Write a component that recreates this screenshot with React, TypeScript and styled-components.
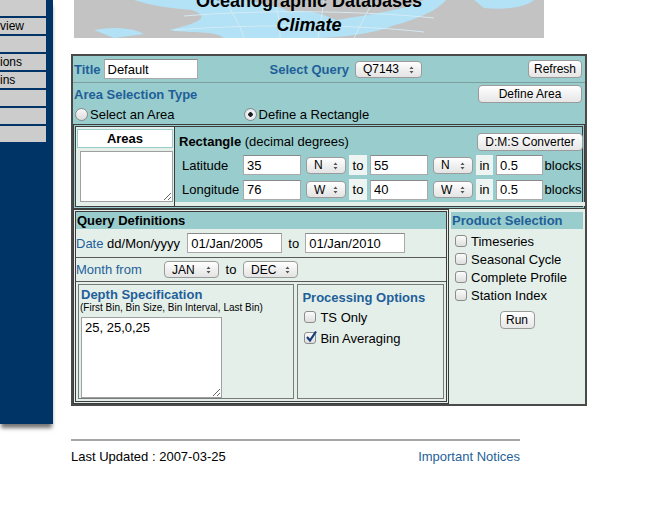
import styled, { createGlobalStyle } from 'styled-components'

const GlobalStyle = createGlobalStyle`
    body {
        margin: 0;
        background: #ffffff;
        font-family: "Liberation Sans", Arial, sans-serif;
        font-size: 13px;
        color: #000000;
    }
`

const TEAL = '#99cccc'
const LIGHT = '#e4efea'
const BLUE = '#1f5f99'

const Page = styled.div`
    display: flex;
    align-items: flex-start;
`

const Sidebar = styled.div`
    width: 53px;
    height: 424px;
    background: #003366;
    box-shadow: 0 5px 4px -1px rgba(0, 0, 0, 0.55);
    display: flex;
    flex-direction: column;
    gap: 2px;
`

const MenuItem = styled.div`
    width: 46px;
    height: 16px;
    background: #cccccc;
    font-size: 12px;
    line-height: 17px;
    overflow: hidden;
    white-space: nowrap;
`

const Main = styled.div`
    margin-left: 18px;
    width: 516px;
`

const Banner = styled.div`
    position: relative;
    margin-left: 3px;
    width: 470px;
    height: 38px;
    overflow: hidden;
    background: #c3c3c3;
    text-align: center;
    font-weight: bold;
    font-size: 18px;
    line-height: 21px;
`

const BannerArt = styled.svg`
    position: absolute;
    inset: 0;
`

const BannerText = styled.div<{ $italic?: boolean }>`
    position: relative;
    font-style: ${p => (p.$italic ? 'italic' : 'normal')};
    margin-top: ${p => (p.$italic ? '3px' : '-9px')};
`

const Frame = styled.div`
    margin-top: 16px;
    width: 512px;
    height: 348px;
    border: 2px solid #4a4a4a;
    background: ${TEAL};
    display: flex;
    flex-direction: column;
`

const Row = styled.div<{ $h: number }>`
    height: ${p => p.$h}px;
    display: flex;
    align-items: center;
    padding: 0 3px 0 1px;
`

const Divider = styled.div`
    height: 1px;
    background: #7f9f9f;
`

const Label = styled.span<{ $gap?: number }>`
    font-weight: bold;
    color: ${BLUE};
    margin-right: ${p => p.$gap ?? 0}px;
`

const Push = styled.span<{ $w: number }>`
    flex: 0 0 ${p => p.$w}px;
`

const Spring = styled.span`
    flex: 1;
`

const TextInput = styled.input<{ $w: number }>`
    box-sizing: border-box;
    width: ${p => p.$w}px;
    height: 20px;
    border: 1px solid #a9a9a9;
    border-top-color: #8a8a8a;
    padding: 0 3px;
    font-family: "Liberation Sans", Arial, sans-serif;
    font-size: 13px;
    background: #ffffff;
    color: #000000;
`

const Button = styled.button<{ $w: number }>`
    box-sizing: border-box;
    width: ${p => p.$w}px;
    height: 18px;
    border: 1px solid #9b9b9b;
    border-radius: 4px;
    background: linear-gradient(#ffffff, #f2f2f2 50%, #e6e6e6);
    font-family: "Liberation Sans", Arial, sans-serif;
    font-size: 12px;
    padding: 0;
    color: #000000;
`

const SelectWrap = styled.span`
    position: relative;
    display: inline-flex;
`

const SelectBox = styled.select<{ $w: number }>`
    appearance: none;
    box-sizing: border-box;
    width: ${p => p.$w}px;
    height: 17px;
    border: 1px solid #9b9b9b;
    border-radius: 4px;
    background: linear-gradient(#ffffff, #f0f0f0 50%, #e4e4e4);
    font-family: "Liberation Sans", Arial, sans-serif;
    font-size: 12px;
    padding: 0 14px 0 7px;
    text-align: left;
    color: #000000;
`

const Arrows = styled.svg`
    position: absolute;
    right: 8px;
    top: 5px;
    pointer-events: none;
`

const Select = ({ value, w }: { value: string; w: number }) => (
    <SelectWrap>
        <SelectBox $w={w} defaultValue={value}>
            <option>{value}</option>
        </SelectBox>
        <Arrows width="5" height="8" viewBox="0 0 5 8">
            <path d="M0.5 3 L2.5 0.5 L4.5 3 Z M0.5 5 L2.5 7.5 L4.5 5 Z" fill="#555" />
        </Arrows>
    </SelectWrap>
)

const RadioDot = styled.span<{ $on?: boolean }>`
    box-sizing: border-box;
    width: 13px;
    height: 13px;
    border-radius: 50%;
    border: 1px solid #8a8a8a;
    background: ${p =>
        p.$on
            ? 'radial-gradient(circle, #1b1b1b 0 2px, #f3f6fa 2.5px, #c9d3de 100%)'
            : 'linear-gradient(#f8f8f8, #dcdcdc)'};
    margin-right: 2px;
`

const Box = styled.span`
    box-sizing: border-box;
    width: 12px;
    height: 12px;
    border: 1px solid #8c8c8c;
    border-radius: 3px;
    background: linear-gradient(#fbfbfb, #dedede);
    margin-right: 4px;
    position: relative;
`

const Tick = styled.svg`
    position: absolute;
    left: 0;
    top: -3px;
`

const Check = ({ on }: { on?: boolean }) => (
    <Box>
        {on && (
            <Tick width="13" height="13" viewBox="0 0 13 13">
                <path d="M2 7 L5 10.5 L11 1.5" fill="none" stroke="#163a78" strokeWidth="2.2" />
            </Tick>
        )}
    </Box>
)

const Option = styled.div<{ $h: number }>`
    height: ${p => p.$h}px;
    display: flex;
    align-items: center;
`

const AreaBlock = styled.div`
    height: 41px;
    display: flex;
    flex-direction: column;
    padding: 0 3px 0 1px;
`

const AreaHead = styled.div`
    height: 22px;
    display: flex;
    align-items: center;
    justify-content: space-between;
`

const Radios = styled.div`
    display: flex;
    align-items: center;
    height: 18px;
    padding-left: 1px;
`

const Panel = styled.div`
    border: 3px double #3c3c3c;
`

const AreaPanel = styled(Panel)`
    height: 79px;
    display: flex;
`

const AreasCell = styled.div`
    width: 98px;
    background: ${LIGHT};
    border-right: 1px solid #3c3c3c;
    padding: 2px 1px;
`

const AreasHead = styled.div`
    height: 17px;
    background: #ffffff;
    border: 1px solid ${TEAL};
    font-weight: bold;
    text-align: center;
    line-height: 17px;
`

const AreasList = styled.textarea`
    box-sizing: border-box;
    display: block;
    width: 93px;
    height: 51px;
    margin: 3px 0 0 3px;
    border: 1px solid #a0a0a0;
    resize: both;
`

const RectCell = styled.div`
    flex: 1;
    display: flex;
    flex-direction: column;
    padding: 4px 2px 0 4px;
    border-bottom: 4px solid ${LIGHT};
`

const RectHead = styled.div`
    height: 22px;
    display: flex;
    align-items: center;
    justify-content: space-between;
`

const RectRow = styled.div`
    height: 25px;
    display: flex;
    align-items: center;
`

const RowLabel = styled.span`
    width: 61px;
    padding-left: 3px;
`

const Small = styled.span<{ $w: number }>`
    width: ${p => p.$w}px;
    text-align: center;
`

const WhiteCell = styled.span<{ $w: number }>`
    width: ${p => p.$w}px;
    align-self: stretch;
    margin: 2px 3px;
    background: #eef4f1;
    display: flex;
    align-items: center;
    justify-content: center;
`

const Lower = styled.div`
    flex: 1;
    display: flex;
`

const QueryPanel = styled(Panel)`
    width: 370px;
    display: flex;
    flex-direction: column;
    background: ${LIGHT};
`

const SectionHead = styled.div<{ $blue?: boolean }>`
    height: 17px;
    background: ${TEAL};
    font-weight: bold;
    color: ${p => (p.$blue ? BLUE : '#000')};
    line-height: 17px;
    padding-left: 1px;
`

const QRow = styled.div<{ $h: number; $line?: boolean }>`
    height: ${p => p.$h}px;
    display: flex;
    align-items: center;
    border-bottom: ${p => (p.$line ? '1px solid #5a5a5a' : 'none')};
`

const BlueText = styled.span<{ $w?: number }>`
    color: ${BLUE};
    ${p => (p.$w ? `width: ${p.$w}px;` : '')}
`

const Gap = styled.span<{ $w: number }>`
    width: ${p => p.$w}px;
    text-align: center;
`

const BoxRow = styled.div`
    flex: 1;
    display: flex;
    gap: 3px;
    padding: 2px;
    border-top: 1px solid #5a5a5a;
`

const SubBox = styled.div<{ $w: number }>`
    width: ${p => p.$w}px;
    border: 1px solid #7a7a7a;
    padding: 2px 2px 0 2px;
    display: flex;
    flex-direction: column;
`

const Hint = styled.div`
    font-size: 10px;
    line-height: 12px;
    margin-left: -1px;
`

const DepthArea = styled.textarea`
    box-sizing: border-box;
    width: 141px;
    height: 81px;
    margin-top: 3px;
    border: 1px solid #a0a0a0;
    font-family: "Liberation Sans", Arial, sans-serif;
    font-size: 13px;
    padding: 2px 3px;
    resize: both;
`

const ProcTitle = styled(Label)`
    margin: 3px 0 0 2px;
`

const ProductPanel = styled.div`
    flex: 1;
    background: ${LIGHT};
    padding: 3px 2px 0 2px;
    display: flex;
    flex-direction: column;
`

const ProductList = styled.div<{ $top?: number }>`
    padding: ${p => p.$top ?? 3}px 0 0 4px;
`

const RunLine = styled.div`
    display: flex;
    justify-content: center;
    margin-top: 7px;
`

const Footer = styled.div`
    width: 449px;
    margin-top: 33px;
    border-top: 2px solid #a5a5a5;
    padding-top: 8px;
    display: flex;
    justify-content: space-between;
`

const Link = styled.a`
    color: ${BLUE};
    text-decoration: none;
`

const menu = ['', 'view', '', 'ions', 'ins', '', '', '']

const CoordRow = ({ label, from, to, dir }: { label: string; from: string; to: string; dir: string }) => (
    <RectRow>
        <RowLabel>{label}</RowLabel>
        <TextInput $w={58} defaultValue={from} />
        <Small $w={5} />
        <Select value={dir} w={40} />
        <WhiteCell $w={18}>to</WhiteCell>
        <TextInput $w={58} defaultValue={to} />
        <Small $w={5} />
        <Select value={dir} w={40} />
        <WhiteCell $w={17}>in</WhiteCell>
        <TextInput $w={47} defaultValue="0.5" />
        <Small $w={40}>blocks</Small>
    </RectRow>
)

const products = ['Timeseries', 'Seasonal Cycle', 'Complete Profile', 'Station Index']

const App = () => {
    return (
        <Page>
            <GlobalStyle />
            <Sidebar>
                {menu.map((m, i) => (
                    <MenuItem key={i}>{m}</MenuItem>
                ))}
            </Sidebar>
            <Main>
                <Banner>
                    <BannerArt width="470" height="38" viewBox="0 0 470 38">
                        <path
                            d="M60 0 H175 C190 6 205 4 215 12 C230 8 250 14 262 20 C300 14 330 10 350 0 H372 C362 12 340 20 318 26 C300 34 262 38 240 38 H150 C140 30 120 34 95 30 C120 24 140 18 118 10 C95 8 78 6 60 0 Z"
                            fill="#b3e1f5"
                        />
                        <path d="M400 0 H460 C450 8 430 10 410 8 Z" fill="#b3e1f5" />
                        <path d="M20 30 C40 26 60 28 70 34 L40 38 Z" fill="#b3e1f5" />
                        <g stroke="#d8eef7" strokeWidth="1" fill="none" opacity="0.9">
                            <path d="M150 0 C160 14 166 26 170 38" />
                            <path d="M200 0 C205 14 206 26 206 38" />
                            <path d="M250 0 C248 14 246 26 244 38" />
                            <path d="M300 0 C292 14 286 26 280 38" />
                            <path d="M110 16 C180 10 280 10 360 18" />
                            <path d="M100 30 C180 24 280 24 350 32" />
                        </g>
                    </BannerArt>
                    <BannerText>Oceanographic Databases</BannerText>
                    <BannerText $italic>Climate</BannerText>
                </Banner>
                <Frame>
                    <Row $h={26}>
                        <Label $gap={3}>Title</Label>
                        <TextInput $w={94} defaultValue="Default" />
                        <Push $w={72} />
                        <Label $gap={6}>Select Query</Label>
                        <Select value="Q7143" w={67} />
                        <Spring />
                        <Button $w={54}>Refresh</Button>
                    </Row>
                    <Divider />
                    <AreaBlock>
                        <AreaHead>
                            <Label>Area Selection Type</Label>
                            <Button $w={104}>Define Area</Button>
                        </AreaHead>
                        <Radios>
                            <RadioDot />
                            <span>Select an Area</span>
                            <Push $w={69} />
                            <RadioDot $on />
                            <span>Define a Rectangle</span>
                        </Radios>
                    </AreaBlock>
                    <AreaPanel>
                        <AreasCell>
                            <AreasHead>Areas</AreasHead>
                            <AreasList />
                        </AreasCell>
                        <RectCell>
                            <RectHead>
                                <span>
                                    <b>Rectangle</b> (decimal degrees)
                                </span>
                                <Button $w={106}>D:M:S Converter</Button>
                            </RectHead>
                            <CoordRow label="Latitude" from="35" to="55" dir="N" />
                            <CoordRow label="Longitude" from="76" to="40" dir="W" />
                        </RectCell>
                    </AreaPanel>
                    <Lower>
                        <QueryPanel>
                            <SectionHead>Query Definitions</SectionHead>
                            <QRow $h={28} $line>
                                <BlueText>Date</BlueText>&nbsp;dd/Mon/yyyy&nbsp;&nbsp;
                                <TextInput $w={95} defaultValue="01/Jan/2005" />
                                <Gap $w={23}>to</Gap>
                                <TextInput $w={100} defaultValue="01/Jan/2010" />
                            </QRow>
                            <QRow $h={23}>
                                <BlueText $w={88}>Month from</BlueText>
                                <Select value="JAN" w={55} />
                                <Gap $w={24}>to</Gap>
                                <Select value="DEC" w={55} />
                            </QRow>
                            <BoxRow>
                                <SubBox $w={211}>
                                    <Label>Depth Specification</Label>
                                    <Hint>(First Bin, Bin Size, Bin Interval, Last Bin)</Hint>
                                    <DepthArea defaultValue="25, 25,0,25" />
                                </SubBox>
                                <SubBox $w={141}>
                                    <ProcTitle>Processing Options</ProcTitle>
                                    <ProductList $top={2}>
                                        <Option $h={20}>
                                            <Check />
                                            TS Only
                                        </Option>
                                        <Option $h={22}>
                                            <Check on />
                                            Bin Averaging
                                        </Option>
                                    </ProductList>
                                </SubBox>
                            </BoxRow>
                        </QueryPanel>
                        <ProductPanel>
                            <SectionHead $blue>Product Selection</SectionHead>
                            <ProductList>
                                {products.map(p => (
                                    <Option $h={18} key={p}>
                                        <Check />
                                        {p}
                                    </Option>
                                ))}
                            </ProductList>
                            <RunLine>
                                <Button $w={35}>Run</Button>
                            </RunLine>
                        </ProductPanel>
                    </Lower>
                </Frame>
                <Footer>
                    <span>Last Updated : 2007-03-25</span>
                    <Link href="#">Important Notices</Link>
                </Footer>
            </Main>
        </Page>
    )
}

export default App
